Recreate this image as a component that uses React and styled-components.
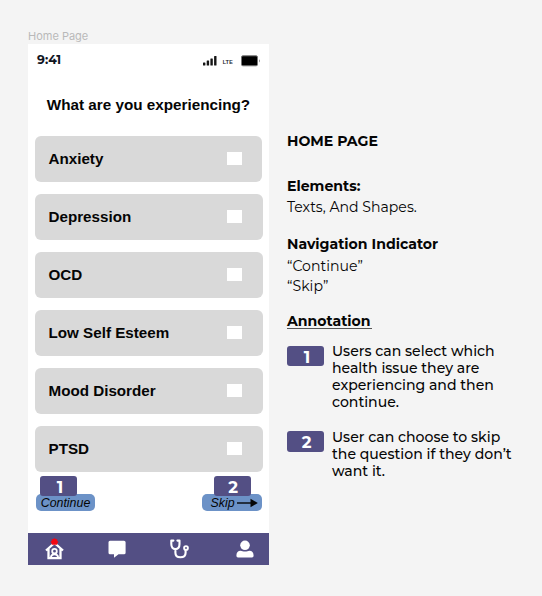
import React from "react";
import styled, { createGlobalStyle } from "styled-components";

const Global = createGlobalStyle`
  * { box-sizing: border-box; }
  body { margin: 0; background: #f4f4f4; color: #050505; }
`;

const arial = `"Liberation Sans", Arial, sans-serif`;
const geometric = `Montserrat, Inter, sans-serif`;

const Page = styled.main`
  width: 542px;
  height: 596px;
  display: flex;
  align-items: flex-start;
  background: #f4f4f4;
  overflow: hidden;
`;

const PhoneColumn = styled.section`
  width: 241px;
  margin-left: 28px;
  padding-top: 29px;
`;

const FrameLabel = styled.div`
  height: 15px;
  font: 400 11px/15px Inter, sans-serif;
  color: #b9b9b9;
`;

const Phone = styled.div`
  height: 521px;
  display: flex;
  flex-direction: column;
  background: #fff;
`;

const StatusBar = styled.header`
  height: 32px;
  padding: 1px 9px 0 9px;
  display: flex;
  align-items: center;
`;

const Clock = styled.span`
  flex: 1;
  margin-top: -2px;
  font: 700 12.4px/16px ${geometric};
  color: #10151f;
`;

const Network = styled.span`
  margin: 2px 8px 0 6px;
  font: 600 5.8px/8px ${geometric};
  color: #20242c;
`;

const Question = styled.h1`
  margin: 18px 0 0;
  height: 22px;
  text-align: center;
  white-space: nowrap;
  font: 700 15.25px/22px ${arial};
`;

const Options = styled.div`
  margin: 20px 0 0 7px;
  display: grid;
  justify-items: start;
  gap: 12px;
`;

const Option = styled.label`
  width: ${(p) => p.$width}px;
  height: 46px;
  padding: 0 0 1px 13.5px;
  display: flex;
  align-items: center;
  border-radius: 6px;
  background: #d9d9d9;
  font: 700 15.2px/20px ${arial};
`;

const OptionName = styled.span`
  width: 178.5px;
`;

const Checkbox = styled.span`
  width: 15px;
  height: 13px;
  margin-bottom: 1px;
  background: #fff;
`;

const Actions = styled.div`
  margin: 4px 7px 0 8px;
  display: flex;
  justify-content: space-between;
`;

const Action = styled.div`
  width: ${(p) => p.$width}px;
  display: flex;
  flex-direction: column;
  align-items: flex-start;
`;

const Badge = styled.span`
  flex: none;
  width: 37px;
  height: ${(p) => p.$height || 20}px;
  margin-left: ${(p) => p.$indent || 0}px;
  padding-left: ${(p) => p.$nudge || 0}px;
  padding-top: 1px;
  border-radius: 3px;
  display: flex;
  align-items: center;
  justify-content: center;
  background: #534f84;
  color: #fff;
  font: 700 16.5px/20px ${geometric};
  z-index: 1;
`;

const Pill = styled.button`
  width: 100%;
  height: 17px;
  margin-top: -2px;
  padding: 0 0 0 ${(p) => p.$inset || 0}px;
  border: 0;
  border-radius: 5px;
  display: flex;
  align-items: center;
  justify-content: center;
  gap: 2px;
  background: #6c92c7;
  color: #050505;
  font: italic 400 12.4px/16px ${arial};
`;

const NavBar = styled.nav`
  height: 32px;
  margin-top: auto;
  padding: 0 15.5px 0 17px;
  display: grid;
  grid-template-columns: 63px 62px 1fr auto;
  align-items: center;
  background: #534f84;
  svg { display: block; }
`;

const Notes = styled.section`
  width: 245px;
  margin-left: 18px;
  padding-top: 131px;
  font-family: ${geometric};
`;

const Heading = styled.h2`
  margin: ${(p) => p.$top || 0}px 0 0;
  font: 700 14.1px/20px ${geometric};
`;

const Underlined = styled(Heading)`
  width: 85px;
  height: 18px;
  border-bottom: 1px solid #555;
`;

const Line = styled.p`
  margin: ${(p) => p.$top || 0}px 0 0;
  font: 400 14.1px/20px ${geometric};
`;

const Note = styled.div`
  margin-top: ${(p) => p.$top}px;
  display: flex;
  align-items: flex-start;
  gap: 8px;
`;

const NoteText = styled.div`
  margin-top: ${(p) => p.$top}px;
  font: 500 14.05px/17px ${geometric};
  white-space: nowrap;
`;

const NoteLine = styled.div``;

const options = ["Anxiety", "Depression", "OCD", "Low Self Esteem", "Mood Disorder", "PTSD"];

const SignalIcon = () => (
  <svg width="14" height="10" viewBox="0 0 14 10" fill="#151515">
    <rect x="0" y="6.4" width="2.4" height="3.2" rx=".5" />
    <rect x="3.7" y="4.4" width="2.4" height="5.2" rx=".5" />
    <rect x="7.4" y="2.4" width="2.4" height="7.2" rx=".5" />
    <rect x="11.1" y="0" width="2.4" height="9.6" rx=".5" />
  </svg>
);

const BatteryIcon = () => (
  <svg width="19" height="12" viewBox="0 0 19 12">
    <rect x=".5" y=".8" width="16" height="10" rx="1.4" fill="#000" stroke="#777" />
    <path d="M18 4.2v3.2c1-.5 1-2.7 0-3.2Z" fill="#777" />
  </svg>
);

const ArrowIcon = () => (
  <svg width="21" height="10" viewBox="0 0 21 10">
    <path d="M0 5h15" stroke="#050505" strokeWidth="1.4" />
    <path d="M13.5.8 20.8 5l-7.3 4.2Z" fill="#050505" />
  </svg>
);

const HomeIcon = () => (
  <svg width="20" height="24" viewBox="0 0 20 24" fill="none" stroke="#fff">
    <path d="M1 13.5 9.5 6l8.5 7.5M3.5 11.8v9.4h12v-9.4" strokeWidth="2.3" />
    <circle cx="9.5" cy="14.2" r="2.3" strokeWidth="1.8" />
    <path d="M5.8 21c.3-5 7.1-5 7.4 0" strokeWidth="1.8" />
    <path d="m9.4 1 1.1 1.1 1.6.1.1 1.6L13.4 5l-1.1 1.2v1.6H6.7V6.2L5.6 5l1.1-1.2.1-1.6 1.6-.1Z" fill="#f30712" stroke="none" />
  </svg>
);

const ChatIcon = () => (
  <svg width="18" height="18" viewBox="0 0 18 18" fill="#fff">
    <path d="M2 .7h14q1.6 0 1.6 1.5v10.5q0 1.5-1.6 1.5h-5.5L6 17.8v-3.6H2Q.5 14.2.5 12.7V2.2Q.5.7 2 .7Z" />
  </svg>
);

const StethoscopeIcon = () => (
  <svg width="19" height="20" viewBox="0 0 19 20" fill="none" stroke="#fff" strokeWidth="2.1">
    <path d="M3.4 1.6H1.3v3.5c0 3 1.6 5 4.1 5s4.1-2 4.1-5V1.6H7.4M5.4 10.1v3.6c0 2.9 1.9 4.6 5 4.6s5.2-1.7 5.2-4.6v-2.3" strokeLinecap="round" strokeLinejoin="round" />
    <circle cx="16" cy="9" r="1.9" strokeWidth="1.9" />
  </svg>
);

const PersonIcon = () => (
  <svg width="18" height="18" viewBox="0 0 18 18" fill="#fff">
    <circle cx="9" cy="5.3" r="4.8" />
    <path d="M.4 15.4c0-3 1.6-4.7 4.2-4.7 1.2 0 2.6.9 4.4.9s3.2-.9 4.4-.9c2.6 0 4.2 1.7 4.2 4.7 0 1.3-.6 2-1.6 2H2c-1 0-1.6-.7-1.6-2Z" />
  </svg>
);

export default function App() {
  return (
    <>
      <Global />
      <Page>
        <PhoneColumn>
          <FrameLabel>Home Page</FrameLabel>
          <Phone>
            <StatusBar>
              <Clock>9:41</Clock>
              <SignalIcon />
              <Network>LTE</Network>
              <BatteryIcon />
            </StatusBar>
            <Question>What are you experiencing?</Question>
            <Options>
              {options.map((name, i) => (
                <Option key={name} $width={i === 0 ? 227 : 227.6}>
                  <OptionName>{name}</OptionName>
                  <Checkbox />
                </Option>
              ))}
            </Options>
            <Actions>
              <Action $width={59}>
                <Badge $indent={4} $nudge={3}>1</Badge>
                <Pill>Continue</Pill>
              </Action>
              <Action $width={60}>
                <Badge $indent={12} $nudge={1}>2</Badge>
                <Pill $inset={4}>Skip<ArrowIcon /></Pill>
              </Action>
            </Actions>
            <NavBar>
              <HomeIcon />
              <ChatIcon />
              <StethoscopeIcon />
              <PersonIcon />
            </NavBar>
          </Phone>
        </PhoneColumn>
        <Notes>
          <Heading>HOME PAGE</Heading>
          <Heading $top={25}>Elements:</Heading>
          <Line $top={1}>Texts, And Shapes.</Line>
          <Heading $top={17}>Navigation Indicator</Heading>
          <Line $top={2}>“Continue”</Line>
          <Line>“Skip”</Line>
          <Underlined $top={15}>Annotation</Underlined>
          <Note $top={17}>
            <Badge $nudge={3}>1</Badge>
            <NoteText $top={-3}>
              <NoteLine>Users can select which</NoteLine>
              <NoteLine>health issue they are</NoteLine>
              <NoteLine>experiencing and then</NoteLine>
              <NoteLine>continue.</NoteLine>
            </NoteText>
          </Note>
          <Note $top={20}>
            <Badge $height={21} $nudge={2}>2</Badge>
            <NoteText $top={-2}>
              <NoteLine>User can choose to skip</NoteLine>
              <NoteLine>the question if they don’t</NoteLine>
              <NoteLine>want it.</NoteLine>
            </NoteText>
          </Note>
        </Notes>
      </Page>
    </>
  );
}
